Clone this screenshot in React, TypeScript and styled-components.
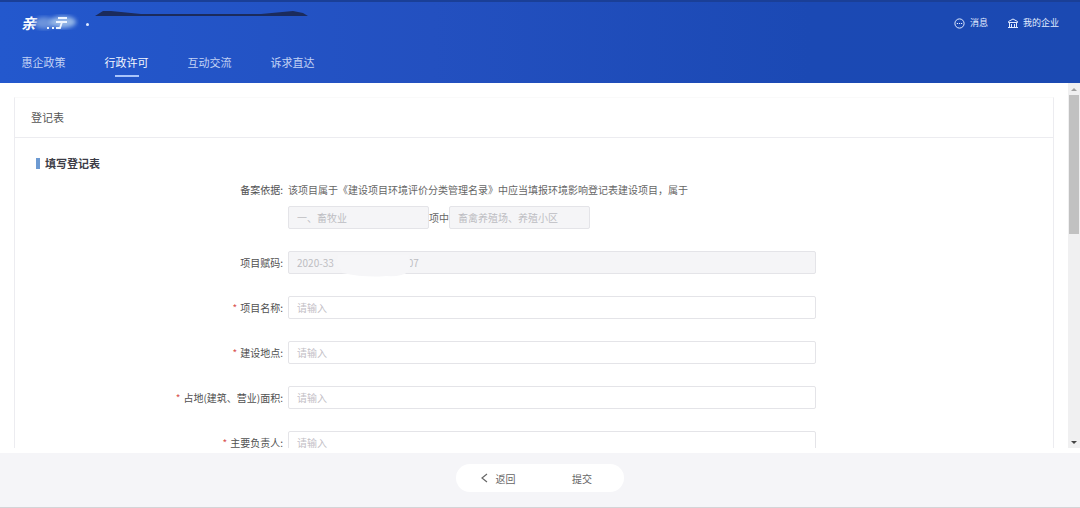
import React from "react";
import styled, { createGlobalStyle } from "styled-components";

const Global = createGlobalStyle`
  * { box-sizing: border-box; }
  body { margin: 0; background: #fff; color: #666; font-family: "Noto Sans CJK SC", "Liberation Sans", sans-serif; font-size: 10px; }
  button, input { font: inherit; }
`;

const Page = styled.div`
  display: flex;
  flex-direction: column;
  height: 100vh;
`;

const Header = styled.header`
  display: flex;
  flex-direction: column;
  justify-content: space-between;
  height: 83px;
  flex: none;
  padding: 12px 21px 6px;
  border-top: 2px solid #1a3f97;
  background: linear-gradient(90deg, #2358cd 0%, #2350c0 40%, #1b49b4 75%, #1b49b2 100%);
`;

const TopBar = styled.div`
  display: flex;
  align-items: center;
  justify-content: space-between;
  height: 18px;
`;

const Brand = styled.div`
  position: relative;
  display: flex;
  align-items: center;
  color: #fff;
  font-size: 15px;
  line-height: 18px;
  font-weight: 700;
`;

const BrandName = styled.span`
  width: 65px;
  font-style: italic;
`;

const Separator = styled.span`
  width: 3px;
  height: 3px;
  margin-top: 3px;
  border-radius: 50%;
  background: #dfe9ff;
`;

const Marks = styled.svg`
  position: absolute;
  left: 0;
  top: -6px;
`;

const Links = styled.div`
  display: flex;
  gap: 20px;
`;

const TopLink = styled.a`
  display: flex;
  align-items: center;
  gap: 5px;
  color: #e2ecff;
  font-size: 9px;
  line-height: 12px;
  text-decoration: none;
`;

const Nav = styled.nav`
  display: flex;
  gap: 38px;
`;

const NavLink = styled.a<{ $active?: boolean }>`
  display: flex;
  flex-direction: column;
  align-items: center;
  gap: 4px;
  color: ${(p) => (p.$active ? "#f4f8ff" : "#c3d3f5")};
  font-size: 11px;
  line-height: 17px;
  min-width: 45px;
  text-decoration: none;
  &::after {
    content: "";
    width: 24px;
    height: 2px;
    background: ${(p) => (p.$active ? "#a9c4fa" : "transparent")};
  }
`;

const Main = styled.main`
  display: flex;
  flex: 1;
  min-height: 0;
  margin-bottom: 5px;
`;

const Scroller = styled.div`
  flex: 1;
  overflow-y: auto;
  scrollbar-width: none;
  padding: 14px 14px 0;
`;

const Rail = styled.div`
  display: flex;
  flex-direction: column;
  align-items: center;
  width: 12px;
  padding: 4px 0 3px;
  background: #f0f0f1;
`;

const Thumb = styled.div`
  width: 10px;
  height: 139px;
  margin-top: 3px;
  margin-bottom: auto;
  background: #c1c1c1;
`;

const Panel = styled.section`
  border: 1px solid #ececf0;
  border-top-color: #fafafa;
`;

const PanelTitle = styled.h1`
  margin: 0;
  padding: 11px 16px;
  border-bottom: 1px solid #ececf0;
  color: #555;
  font-size: 11px;
  line-height: 17px;
  font-weight: 400;
`;

const SectionTitle = styled.h2`
  display: flex;
  align-items: center;
  gap: 5px;
  margin: 17px 21px 7px;
  color: #3c3c46;
  font-size: 11px;
  line-height: 16px;
  font-weight: 700;
  &::before {
    content: "";
    width: 4px;
    height: 11px;
    background: #6d9ad2;
  }
`;

const Form = styled.form`
  display: grid;
  gap: 22px;
  padding-bottom: 22px;
`;

const Field = styled.div`
  display: grid;
  grid-template-columns: 268fr 528fr 232fr;
  column-gap: 5px;
  align-items: start;
`;

const Label = styled.label<{ $required?: boolean }>`
  color: #505050;
  line-height: 23px;
  text-align: right;
  &::before {
    content: ${(p) => (p.$required ? '"*"' : "none")};
    margin-right: 3px;
    color: #d9534f;
  }
`;

const Basis = styled.div`
  display: grid;
  gap: 5px;
  white-space: nowrap;
  line-height: 23px;
`;

const Pair = styled.div`
  display: flex;
  align-items: center;
`;

const Input = styled.input<{ $short?: boolean }>`
  width: ${(p) => (p.$short ? "141px" : "100%")};
  height: 23px;
  padding: 0 8px;
  border: 1px solid #e4e4e8;
  border-radius: 2px;
  background: #fff;
  color: #555;
  outline: none;
  &::placeholder { color: #c3c0c6; }
  &:disabled { background: #f5f5f7; color: #bdbdc2; }
`;

const CodeBox = styled.div`
  position: relative;
`;

const Smudge = styled.svg`
  position: absolute;
  left: 45px;
  top: 2px;
`;

const Footer = styled.footer`
  display: flex;
  align-items: center;
  justify-content: center;
  flex: none;
  height: 55px;
  padding-bottom: 4px;
  border-bottom: 1px solid #d4d4d7;
  background: #f5f5f8;
`;

const Actions = styled.div`
  display: flex;
  width: 168px;
  height: 28px;
  border-radius: 14px;
  background: #fff;
`;

const Action = styled.button`
  display: flex;
  align-items: center;
  justify-content: center;
  gap: 8px;
  flex: 1;
  padding: 0;
  border: 0;
  background: none;
  color: #666;
`;

const fields = [
  { id: "name", label: "项目名称:" },
  { id: "place", label: "建设地点:" },
  { id: "area", label: "占地(建筑、营业)面积:" },
  { id: "owner", label: "主要负责人:" },
];

export default function App() {
  return (
    <Page>
      <Global />
      <Header>
        <TopBar>
          <Brand>
            <BrandName>亲</BrandName>
            <Separator />
            <Marks width="290" height="26" viewBox="0 0 290 26">
              <defs>
                <filter id="soft"><feGaussianBlur stdDeviation="2" /></filter>
              </defs>
              <ellipse cx="23" cy="15" rx="10" ry="6" fill="#7fa3e0" opacity=".8" filter="url(#soft)" />
              <ellipse cx="42" cy="14" rx="13" ry="6" fill="#a9c8ec" opacity=".85" filter="url(#soft)" />
              <path d="M26 20h2M31 20h2M37 10h9M35 14h11M41 14l-2 6h-4" stroke="#eef5ff" strokeWidth="1.800" fill="none" />
              <path d="M74 8l8-5 8 0 30 3h120l32-3 10 2 5 3z" fill="#1b2b5c" />
            </Marks>
          </Brand>
          <Links>
            <TopLink href="#messages">
              <svg width="11" height="11" viewBox="0 0 11 11" fill="none" stroke="currentColor">
                <circle cx="5.500" cy="5.500" r="4.600" />
                <path d="M2.800 5.500h1.200M4.900 5.500h1.200M7 5.500h1.200" strokeWidth="1.200" />
              </svg>
              消息
            </TopLink>
            <TopLink href="#company">
              <svg width="10" height="11" viewBox="0 0 10 11" fill="none" stroke="currentColor">
                <path d="M.5 4.500V3.500L5 1l4.500 2.500v1zM1.500 4.500v5M3.500 6v3.500M6.500 6v3.500M8.500 4.500v5M0 9.500h10" />
              </svg>
              我的企业
            </TopLink>
          </Links>
        </TopBar>
        <Nav>
          <NavLink href="#policy">惠企政策</NavLink>
          <NavLink href="#permit" $active>行政许可</NavLink>
          <NavLink href="#exchange">互动交流</NavLink>
          <NavLink href="#appeal">诉求直达</NavLink>
        </Nav>
      </Header>
      <Main>
        <Scroller>
          <Panel>
            <PanelTitle>登记表</PanelTitle>
            <SectionTitle>填写登记表</SectionTitle>
            <Form id="registration">
              <Field>
                <Label htmlFor="category">备案依据:</Label>
                <Basis>
                  <span>该项目属于《建设项目环境评价分类管理名录》中应当填报环境影响登记表建设项目，属于</span>
                  <Pair>
                    <Input id="category" $short disabled defaultValue="一、畜牧业" />
                    项中
                    <Input aria-label="项中" $short disabled defaultValue="畜禽养殖场、养殖小区" />
                  </Pair>
                </Basis>
              </Field>
              <Field>
                <Label htmlFor="code">项目赋码:</Label>
                <CodeBox>
                  <Input id="code" disabled defaultValue="2020-33                                 07" />
                  <Smudge width="80" height="26" viewBox="0 0 80 26">
                    <path d="M3 2h72q5 10 0 17-6 5-22 4-20 2-44-3-6-8-4-18z" fill="#f6f6f8" />
                  </Smudge>
                </CodeBox>
              </Field>
              {fields.map((f) => (
                <Field key={f.id}>
                  <Label htmlFor={f.id} $required>{f.label}</Label>
                  <Input id={f.id} placeholder="请输入" />
                </Field>
              ))}
            </Form>
          </Panel>
        </Scroller>
        <Rail>
          <svg width="8" height="5" viewBox="0 0 8 5"><path d="M1 4l3-3 3 3z" fill="#a0a0a0" /></svg>
          <Thumb />
          <svg width="8" height="5" viewBox="0 0 8 5"><path d="M1 1l3 3 3-3z" fill="#444" /></svg>
        </Rail>
      </Main>
      <Footer>
        <Actions>
          <Action type="button">
            <svg width="7" height="10" viewBox="0 0 7 10" fill="none" stroke="currentColor" strokeWidth="1.200"><path d="M6 1L1 5l5 4" /></svg>
            返回
          </Action>
          <Action type="submit" form="registration">提交</Action>
        </Actions>
      </Footer>
    </Page>
  );
}
